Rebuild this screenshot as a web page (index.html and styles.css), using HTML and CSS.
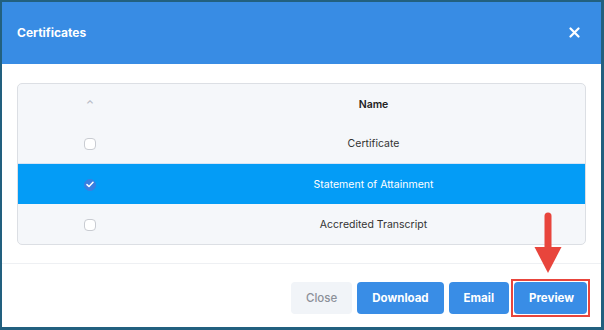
FILE: index.html
```html
<!DOCTYPE html>
<html lang="en">
<head>
    <meta charset="UTF-8" />
    <title>Certificates</title>
    <link rel="stylesheet" href="styles.css">
</head>
<body>
<div class="frame">
    <div class="modal">
        <div class="modal-header">
            <h2>Certificates</h2>
            <button class="close-x" aria-label="Close">
                <svg width="11" height="11" viewBox="0 0 11 11">
                    <path d="M1.5 1.5 L9.5 9.5 M9.5 1.5 L1.5 9.5" stroke="#fff" stroke-width="2.2" stroke-linecap="round"/>
                </svg>
            </button>
        </div>

        <div class="modal-body">
            <table class="cert-table">
                <thead>
                    <tr>
                        <th class="col-check"><span class="sort">&#8963;</span></th>
                        <th>Name</th>
                    </tr>
                </thead>
                <tbody>
                    <tr>
                        <td class="col-check"><span class="checkbox"></span></td>
                        <td>Certificate</td>
                    </tr>
                    <tr class="selected">
                        <td class="col-check">
                            <span class="checkbox checked">
                                <svg width="8" height="7" viewBox="0 0 8 7">
                                    <path d="M1 3.6 L3 5.5 L7 1.3" fill="none" stroke="#fff" stroke-width="1.5" stroke-linecap="round" stroke-linejoin="round"/>
                                </svg>
                            </span>
                        </td>
                        <td>Statement of Attainment</td>
                    </tr>
                    <tr>
                        <td class="col-check"><span class="checkbox"></span></td>
                        <td>Accredited Transcript</td>
                    </tr>
                </tbody>
            </table>
        </div>

        <div class="modal-footer">
            <button class="btn btn-light">Close</button>
            <button class="btn">Download</button>
            <button class="btn">Email</button>
            <span class="highlight-box">
                <button class="btn">Preview</button>
            </span>
        </div>

        <!-- annotation arrow -->
        <svg class="arrow" width="30" height="64" viewBox="0 0 30 64">
            <line x1="15" y1="6" x2="15" y2="40" stroke="#e8453c" stroke-width="7" stroke-linecap="round"/>
            <polygon points="1.5,37 28.5,37 15,63" fill="#e8453c"/>
        </svg>
    </div>
</div>
</body>
</html>
```

FILE: styles.css
```css
* {
    margin: 0;
    padding: 0;
    box-sizing: border-box;
    font-family: "Inter", "Open Sans", sans-serif;
}

body {
    background-color: #22607f;
}

.frame {
    width: 604px;
    height: 330px;
    padding: 2px 3px 3px 2px;
    background-color: #22607f;
}

.modal {
    position: relative;
    background-color: #fff;
    height: 100%;
    display: flex;
    flex-direction: column;
}

.modal-header {
    height: 62px;
    background-color: #388ce4;
    display: flex;
    align-items: center;
    justify-content: space-between;
    padding: 0 14px 2px 15px;
}

.modal-header h2 {
    color: #fff;
    font-size: 12px;
    font-weight: 700;
}

.close-x {
    background: none;
    border: none;
    display: flex;
    margin-right: 7px;
}

.modal-body {
    padding: 19px 15px 18px 15px;
    border-bottom: 1px solid #eef0f3;
}

.cert-table {
    width: 100%;
    border-collapse: separate;
    border-spacing: 0;
    background-color: #f5f7fa;
    border: 1px solid #dcdfe4;
    border-radius: 5px;
    overflow: hidden;
    font-size: 10.5px;
    color: #333;
}

.cert-table th,
.cert-table td {
    height: 40px;
    text-align: center;
    vertical-align: middle;
}

.cert-table th {
    font-weight: 600;
    font-size: 10.5px;
    color: #222;
}

.cert-table .col-check {
    width: 144px;
}

.cert-table tbody tr:first-child td {
    border-bottom: 1px solid #d6e4f5;
}

.sort {
    color: #b8bcc6;
    font-size: 10px;
}

.checkbox {
    display: inline-flex;
    align-items: center;
    justify-content: center;
    width: 12px;
    height: 12px;
    border: 1px solid #c9ccd2;
    border-radius: 4px;
    background-color: #fff;
    vertical-align: middle;
}

.checkbox.checked {
    background-color: #3a7fe0;
    border-color: #3a7fe0;
    border-radius: 50%;
}

.cert-table tr.selected td {
    background-color: #049cf6;
    color: #fff;
}

.modal-footer {
    flex: 1;
    display: flex;
    justify-content: flex-end;
    align-items: flex-start;
    gap: 5px;
    padding: 18px 11px 0 0;
}

.btn {
    height: 32px;
    padding: 0 15px;
    border: none;
    border-radius: 4px;
    background-color: #398de6;
    color: #fff;
    font-size: 11.5px;
    font-weight: 700;
}

.btn-light {
    background-color: #f1f4f8;
    color: #8c9099;
    font-weight: 500;
}

.highlight-box {
    display: flex;
    margin: -3px 0 0 -3px;
    padding: 1px;
    border: 2px solid #e8453c;
}

.highlight-box .btn {
    width: 73px;
}

.arrow {
    position: absolute;
    left: 531px;
    top: 208px;
}
```
